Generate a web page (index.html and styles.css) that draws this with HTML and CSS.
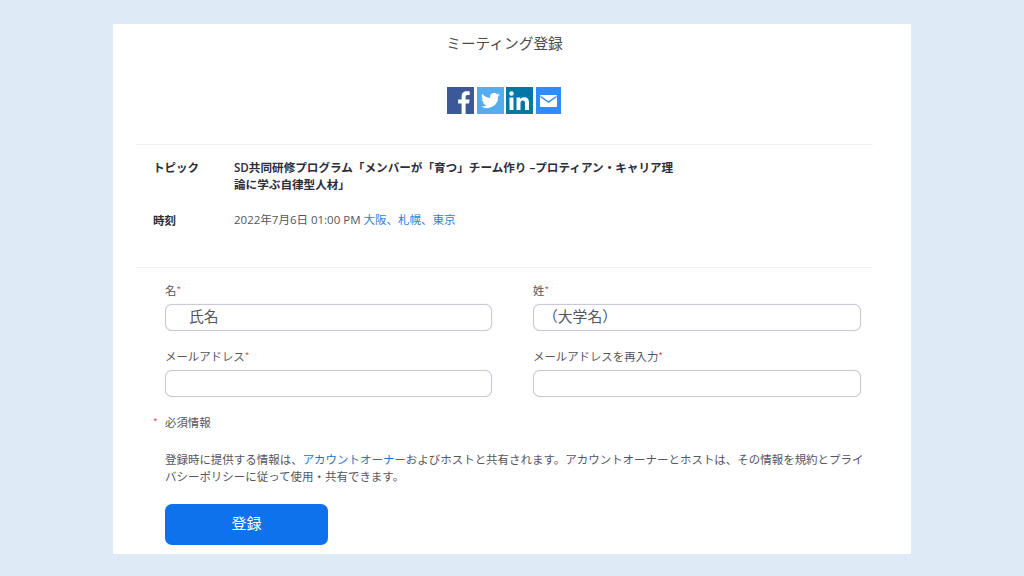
FILE: index.html
```html
<!DOCTYPE html>
<html lang="ja">
<head>
<meta charset="utf-8">
<title>ミーティング登録</title>
<link rel="stylesheet" href="styles.css">
</head>
<body>
<main class="card">
  <h1 class="title">ミーティング登録</h1>
  <div class="share">
    <svg class="icon" width="27" height="27" viewBox="0 0 27 27"><rect width="27" height="27" fill="#3b5998"/><path d="M18.6 27V16.6h3.4l.6-4h-4v-2.5c0-1.2.4-2 2-2h2.1V4.500c-.4 0-1.600-.2-3-.2-3 0-5.100 1.800-5.100 5.200v3.100h-3.500v4h3.500V27z" fill="#fff"/></svg>
    <svg class="icon" width="27" height="27" viewBox="0 0 27 27"><rect width="27" height="27" fill="#55acee"/><path d="M23 7.800c-.7.300-1.500.5-2.300.6.800-.5 1.400-1.200 1.700-2.100-.8.500-1.600.8-2.500 1a3.900 3.900 0 0 0-6.700 3.600c-3.200-.2-6.100-1.700-8-4.100-1 1.800-.5 4 1.200 5.200-.6 0-1.200-.2-1.800-.5 0 1.900 1.300 3.500 3.100 3.900-.6.200-1.200.2-1.800.1.500 1.600 2 2.700 3.700 2.700A7.900 7.900 0 0 1 4 19.300 11.100 11.100 0 0 0 21.100 9.400c.8-.4 1.400-1 1.900-1.600z" fill="#fff"/></svg>
    <svg class="icon" width="27" height="27" viewBox="0 0 27 27"><rect width="27" height="27" fill="#0077a5"/><rect x="3.500" y="10.500" width="4" height="12.500" fill="#fff"/><circle cx="5.500" cy="6.500" r="2.300" fill="#fff"/><path d="M10.500 10.500h3.800v1.800c.7-1.200 2.100-2.100 4-2.100 3.600 0 4.700 2.200 4.700 5.600V23h-4v-6.400c0-1.700-.4-3-2-3-1.800 0-2.500 1.300-2.500 3V23h-4z" fill="#fff"/></svg>
    <svg class="icon" width="25" height="27" viewBox="0 0 25 27"><rect width="25" height="27" fill="#2d8cff"/><rect x="4" y="8" width="17" height="12" rx="1" fill="#fff"/><path d="M4.500 9.500l8 5.500 8-5.500" fill="none" stroke="#2d8cff" stroke-width="1.500"/></svg>
  </div>
  <section class="info">
    <div class="info-row info-topic">
      <div class="info-label">トピック</div>
      <div class="info-topic-text">SD共同研修プログラム「メンバーが「育つ」チーム作り –プロティアン・キャリア理論に学ぶ自律型人材」</div>
    </div>
    <div class="info-row">
      <div class="info-label">時刻</div>
      <div class="info-time">2022年7月6日 01:00 PM <a class="link" href="#">大阪、札幌、東京</a></div>
    </div>
  </section>
  <form class="form">
    <div class="fields">
      <div class="field">
        <label class="label">名<span class="req">*</span></label>
        <input class="input input-name" type="text" value="氏名">
      </div>
      <div class="field">
        <label class="label">姓<span class="req">*</span></label>
        <input class="input input-univ" type="text" value="（大学名）">
      </div>
      <div class="field">
        <label class="label">メールアドレス<span class="req">*</span></label>
        <input class="input" type="text">
      </div>
      <div class="field">
        <label class="label">メールアドレスを再入力<span class="req">*</span></label>
        <input class="input" type="text">
      </div>
    </div>
    <p class="required"><span class="req req-note">*</span>必須情報</p>
    <p class="notice">登録時に提供する情報は、<a class="notice-link" href="#">アカウントオーナー</a>およびホストと共有されます。アカウントオーナーとホストは、その情報を規約とプライバシーポリシーに従って使用・共有できます。</p>
    <button class="submit" type="button">登録</button>
  </form>
</main>
</body>
</html>
```
FILE: styles.css
```css
* { box-sizing: border-box; }
html, body { height: 100%; }
body {
  margin: 0;
  padding: 24px 113px 22px;
  background: #deeaf6;
  overflow: hidden;
  font-family: "Noto Sans CJK JP", "Liberation Sans", sans-serif;
  color: #4a4a55;
}
.card {
  height: 530px;
  background: #fff;
  padding: 0 38px 0 23px;
  overflow: hidden;
}
.title {
  margin: 0;
  padding-top: 8px;
  height: 63px;
  font-size: 14.700px;
  line-height: 22px;
  font-weight: 400;
  text-align: center;
  color: #4a4a4a;
}
.share {
  display: flex;
  justify-content: center;
  gap: 2.600px;
  height: 57px;
  padding-right: 1px;
}
.icon { display: block; }
.info {
  border-top: 1px solid #f1f1f3;
  border-bottom: 1px solid #f1f1f3;
  height: 124px;
  padding: 14px 0 0 17px;
}
.info-row { display: flex; }
.info-topic { height: 53px; }
.info-label {
  width: 81px;
  flex: none;
  font-size: 11.500px;
  line-height: 16px;
  font-weight: 700;
  color: #2d2d3a;
}
.info-topic-text {
  width: 446px;
  font-family: "Open Sans", "Noto Sans CJK JP", sans-serif;
  font-size: 11.600px;
  line-height: 17px;
  font-weight: 600;
  color: #2d2d3a;
}
.info-time {
  font-family: "Open Sans", "Noto Sans CJK JP", sans-serif;
  font-size: 11.500px;
  line-height: 16px;
  color: #555560;
}
.link { color: #2d7ee8; text-decoration: none; }
.form { padding: 13px 11px 0 29px; }
.fields {
  display: grid;
  grid-template-columns: 327px 328px;
  column-gap: 41px;
  row-gap: 16px;
}
.field { display: flex; flex-direction: column; }
.label {
  height: 18px;
  font-size: 11.400px;
  line-height: 18px;
  color: #55555f;
  margin-bottom: 5px;
}
.req { color: #e8545c; font-size: 10px; vertical-align: 1px; }
.input {
  height: 27px;
  width: 100%;
  border: 1px solid #c9c9d8;
  border-radius: 7px;
  background: #fff;
  padding: 0 0 4px;
  font-family: inherit;
  font-size: 14.800px;
  color: #55555f;
  outline: none;
  box-shadow: 0 0 1px #c9c9d8;
}
.input-name { padding-left: 23px; }
.input-univ { padding-left: 9px; }
.required {
  margin: 17px 0 0 -12px;
  font-size: 11.400px;
  line-height: 16px;
  color: #55555f;
}
.req-note { display: inline-block; width: 12px; }
.notice {
  margin: 21px -6px 0 0;
  font-size: 11.480px;
  line-height: 16.500px;
  color: #55555f;
}
.notice-link { color: #2a6fc9; text-decoration: none; }
.submit {
  display: block;
  margin-top: 20px;
  width: 163px;
  height: 41px;
  border: 0;
  border-radius: 7px;
  background: #0e72ed;
  color: #fff;
  font-family: inherit;
  font-size: 15px;
  padding: 0 0 5px;
}
```
